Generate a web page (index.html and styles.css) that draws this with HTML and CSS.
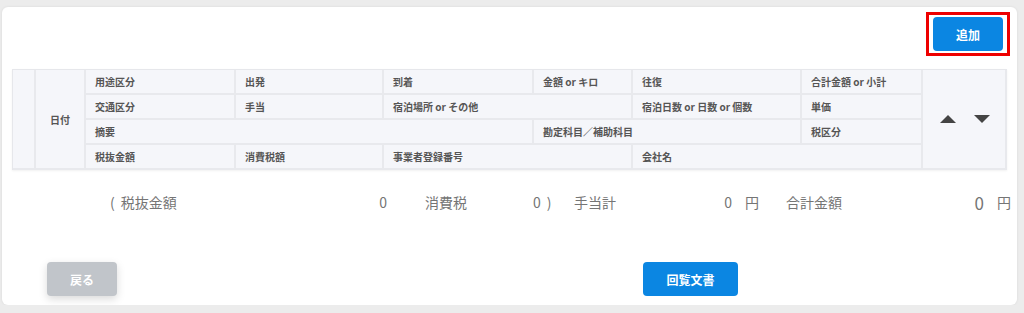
FILE: index.html
```html
<!DOCTYPE html>
<html lang="ja">
<head>
    <meta charset="UTF-8">
    <meta name="viewport" content="width=device-width, initial-scale=1.0">
    <title>経費明細</title>
    <link rel="stylesheet" href="styles.css">
</head>
<body>
    <div class="card">
        <div class="top-bar">
            <div class="highlight">
                <button class="btn btn-primary btn-add">追加</button>
            </div>
        </div>

        <div class="detail-table">
            <div class="cell c-blank"></div>
            <div class="cell c-date">日付</div>

            <div class="cell">用途区分</div>
            <div class="cell">出発</div>
            <div class="cell">到着</div>
            <div class="cell">金額 or キロ</div>
            <div class="cell">往復</div>
            <div class="cell">合計金額 or 小計</div>

            <div class="cell c-arrows">
                <span class="arrow up"></span>
                <span class="arrow down"></span>
            </div>

            <div class="cell">交通区分</div>
            <div class="cell">手当</div>
            <div class="cell span2">宿泊場所 or その他</div>
            <div class="cell">宿泊日数 or 日数 or 個数</div>
            <div class="cell">単価</div>

            <div class="cell span3">摘要</div>
            <div class="cell span2">勘定科目／補助科目</div>
            <div class="cell">税区分</div>

            <div class="cell">税抜金額</div>
            <div class="cell">消費税額</div>
            <div class="cell span2">事業者登録番号</div>
            <div class="cell span2">会社名</div>
        </div>

        <div class="summary">
            <span class="s-label w-notax"><span class="paren">(</span>税抜金額</span>
            <span class="s-num w-notax-val">0</span>
            <span class="s-label w-tax">消費税</span>
            <span class="s-num w-tax-val">0<span class="paren-close">)</span></span>
            <span class="s-label w-allow">手当計</span>
            <span class="s-num w-allow-val">0</span>
            <span class="s-yen">円</span>
            <span class="s-label w-total">合計金額</span>
            <span class="s-num s-big w-total-val">0</span>
            <span class="s-yen">円</span>
        </div>

        <div class="bottom-bar">
            <button class="btn btn-gray">戻る</button>
            <button class="btn btn-primary btn-circulate">回覧文書</button>
        </div>
    </div>
</body>
</html>
```

FILE: styles.css
```css
body {
    margin: 0;
    background-color: #ececec;
    font-family: "Noto Sans CJK JP", "Noto Sans", sans-serif;
}
.card {
    margin: 7px 0 0 2px;
    width: 1015px;
    height: 298px;
    box-sizing: border-box;
    padding: 5px 0 8px 0;
    background-color: white;
    border-radius: 6px;
    box-shadow: 0 0 3px rgba(0, 0, 0, 0.08);
}
.top-bar {
    display: flex;
    justify-content: flex-end;
    padding-right: 7px;
}
.highlight {
    border: 3px solid #ee0000;
    padding: 2px 4px;
}
.btn {
    border: none;
    border-radius: 4px;
    color: white;
    font-family: inherit;
    font-size: 12px;
    font-weight: bold;
    height: 34px;
    cursor: pointer;
}
.btn-primary {
    background-color: #0b86e2;
}
.btn-add {
    width: 70px;
    display: block;
}
.detail-table {
    margin: 13px 10px 0 10px;
    display: grid;
    grid-template-columns: 23px 50px 150px 148px 150px 99px 169px 121px 1fr;
    grid-template-rows: repeat(4, 25px);
    background-color: #f5f6fa;
    border-top: 1px solid #e6e7eb;
    border-left: 1px solid #e6e7eb;
    box-shadow: 0 1px 2px rgba(0, 0, 0, 0.06);
}
.cell {
    border-right: 2px solid #e8e9ed;
    border-bottom: 2px solid #e8e9ed;
    font-size: 10px;
    font-weight: bold;
    color: #555;
    padding-left: 9px;
    display: flex;
    align-items: center;
    box-sizing: border-box;
}
.c-blank {
    grid-row: 1 / span 4;
    padding: 0;
}
.c-date {
    grid-row: 1 / span 4;
    justify-content: center;
    padding: 0;
}
.c-arrows {
    grid-column: 9;
    grid-row: 1 / span 4;
    justify-content: center;
    gap: 18px;
    padding: 0 0 0 2px;
}
.span2 {
    grid-column: span 2;
}
.span3 {
    grid-column: span 3;
}
.arrow {
    width: 0;
    height: 0;
    border-left: 8px solid transparent;
    border-right: 8px solid transparent;
}
.arrow.up {
    border-bottom: 8px solid #444;
}
.arrow.down {
    border-top: 8px solid #444;
}
.summary {
    display: flex;
    align-items: center;
    margin-top: 22px;
    padding-left: 108px;
    height: 20px;
    font-size: 14px;
    color: #757575;
}
.paren {
    margin-right: 6px;
}
.paren-close {
    margin-left: 6px;
}
.s-num {
    text-align: right;
}
.s-big {
    font-size: 17px;
}
.w-notax {
    width: 240px;
}
.w-notax-val {
    width: 37px;
}
.w-tax {
    margin-left: 38px;
    width: 108px;
}
.w-tax-val {
    width: 17px;
    text-align: left;
}
.w-allow {
    margin-left: 24px;
    width: 130px;
}
.w-allow-val {
    width: 28px;
}
.s-yen {
    margin-left: 13px;
}
.w-total {
    margin-left: 27px;
    width: 120px;
}
.w-total-val {
    width: 78px;
}
.bottom-bar {
    display: flex;
    align-items: center;
    margin-top: 50px;
    padding-left: 45px;
}
.btn-gray {
    width: 70px;
    background-color: #c1c5ca;
    box-shadow: 0 3px 8px rgba(0, 0, 0, 0.15);
}
.btn-circulate {
    margin-left: 526px;
    width: 95px;
}
```
